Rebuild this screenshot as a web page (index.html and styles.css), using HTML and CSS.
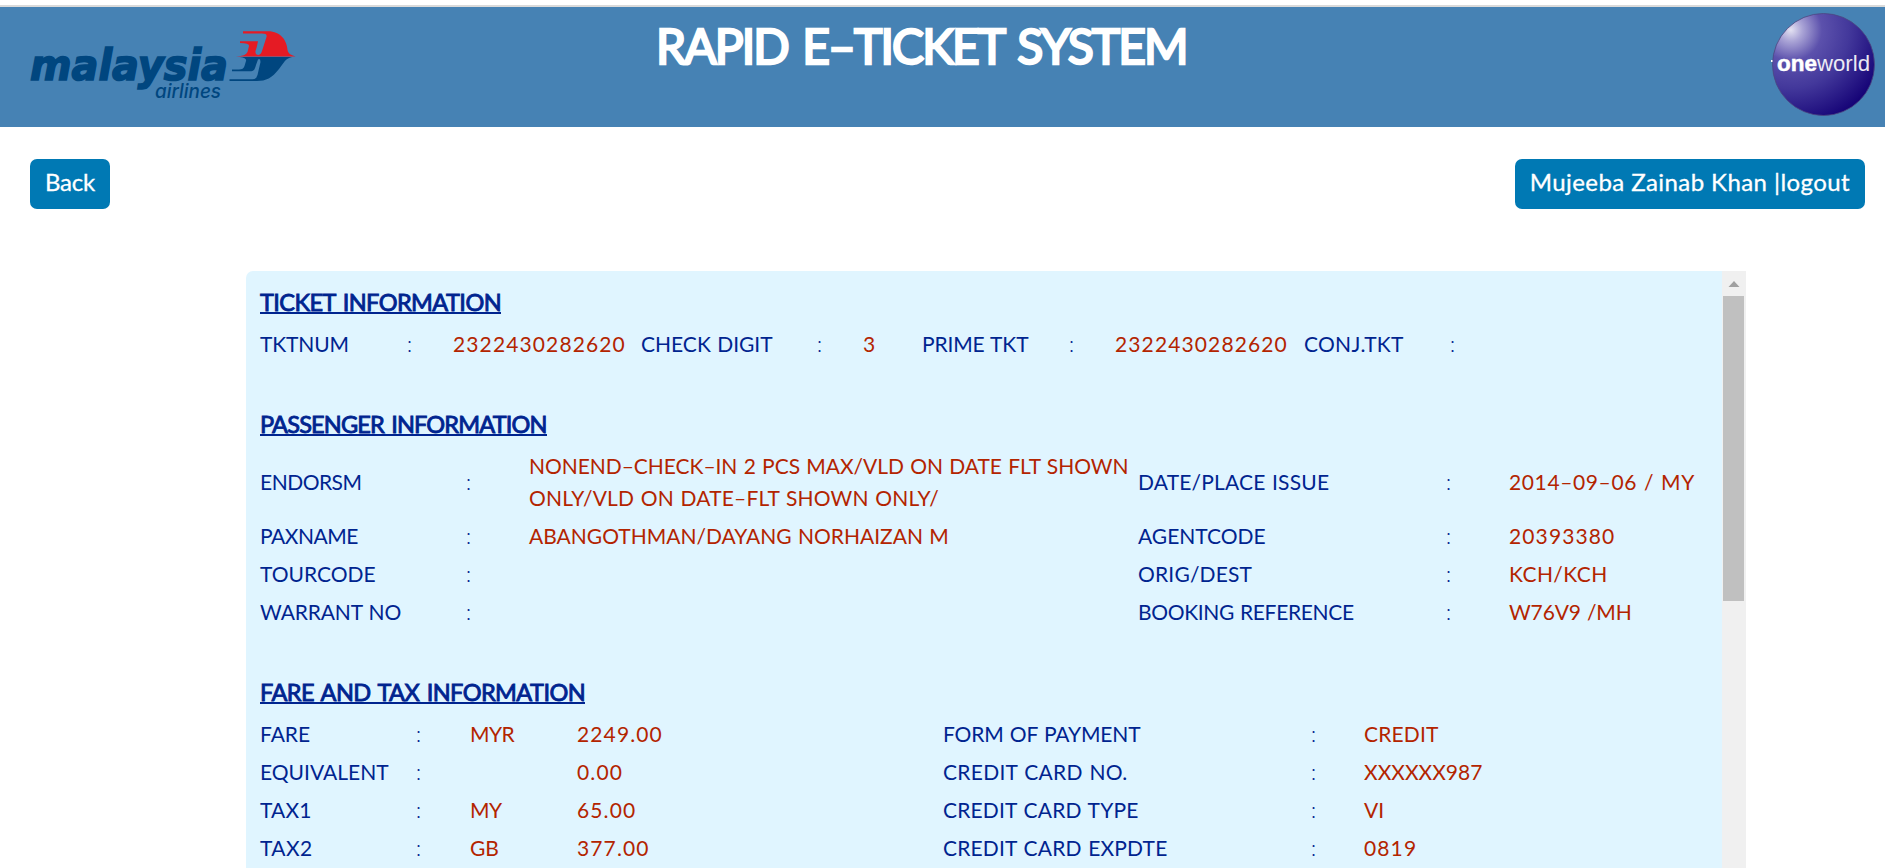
FILE: index.html
```html
<!DOCTYPE html>
<html lang="en">
<head>
<meta charset="utf-8">
<title>Rapid E-Ticket System</title>
<link rel="stylesheet" href="styles.css">
</head>
<body>
<header class="banner">
  <svg class="logo" width="280" height="120" viewBox="20 7 280 120">
    <g fill="#00467f" font-style="italic">
      <text x="30" y="80" font-size="43" font-weight="700" font-family="DejaVu Sans, sans-serif" textLength="198" lengthAdjust="spacingAndGlyphs" stroke="#00467f" stroke-width="1.600">malaysia</text>
      <text x="155" y="97.5" font-size="20" font-weight="500" font-family="Inter, sans-serif" textLength="66" lengthAdjust="spacingAndGlyphs">airlines</text>
    </g>
    <path fill="#e51b24" d="M243 31.3H268C281 31.3 287 41 287.500 50Q288 54.500 295.500 56.500H236Q246 56 247.500 52L249 46Q249.500 43.200 240 43V41.300H258Q257 47 255.500 51Q255 55 258.500 55Q261 54.500 262 51L266.500 37Q267.500 33.600 262 33.600H243Z"/>
    <path fill="#00467f" d="M240 57H292C285 58.500 284 63 279 69C272 78 266 81 257 81H229.500V79.300H252Q256.500 79.500 257.500 75L260.500 62Q260.500 58 258 59.500L256 65C254.500 70 254 71.200 250 71.200H232V69.600H239Q243.500 69.500 244.500 66L246 61Q247 58 240 57Z"/>
  </svg>
  <h1 class="title">RAPID E–TICKET SYSTEM</h1>
  <svg class="partner" width="120" height="120" viewBox="1765 7 120 120">
    <defs>
      <radialGradient id="ball" cx="0.18" cy="0.16" r="0.95">
        <stop offset="0" stop-color="#e4e2f2"/>
        <stop offset="0.12" stop-color="#aaa4d6"/>
        <stop offset="0.32" stop-color="#5c51ac"/>
        <stop offset="0.6" stop-color="#43389b"/>
        <stop offset="1" stop-color="#160477"/>
      </radialGradient>
    </defs>
    <circle cx="1823.500" cy="64.500" r="51" fill="url(#ball)" stroke="#4b4680" stroke-width="0.8"/>
    <rect x="1771" y="60" width="1.500" height="2" fill="#fff"/>
    <g fill="#fff" font-family="Liberation Sans, Arial, sans-serif" font-size="21.500">
      <text x="1777" y="71" font-weight="700" textLength="40" lengthAdjust="spacingAndGlyphs" stroke="#fff" stroke-width="0.500">one</text>
      <text x="1817" y="71" textLength="53" lengthAdjust="spacingAndGlyphs" opacity="0.9">world</text>
    </g>
  </svg>
</header>
<nav class="actions">
  <a class="button back">Back</a>
  <a class="button">Mujeeba Zainab Khan |logout</a>
</nav>
<main class="panel">
  <div class="content">
    <h2 class="heading"><span class="h-ticket">TICKET INFORMATION</span></h2>
    <div class="row ticket">
      <span class="s-snug">TKTNUM</span><i>:</i><b class="num">2322430282620</b>
      <span>CHECK DIGIT</span><i>:</i><b class="num">3</b>
      <span class="s-snug">PRIME TKT</span><i>:</i><b class="num">2322430282620</b>
      <span class="s-wide">CONJ.TKT</span><i>:</i>
    </div>
    <h2 class="heading"><span class="h-passenger">PASSENGER INFORMATION</span></h2>
    <div class="row passenger">
      <span class="s-tight">ENDORSM</span><i>:</i>
      <b class="endorsement"><span class="s-notice">NONEND–CHECK–IN 2 PCS MAX/VLD ON DATE FLT SHOWN</span><br><span class="s-loose">ONLY/VLD ON DATE–FLT SHOWN ONLY/</span></b>
      <span class="s-loose">DATE/PLACE ISSUE</span><i>:</i><b class="date">2014–09–06 / MY</b>
    </div>
    <div class="row passenger">
      <span class="s-tight">PAXNAME</span><i>:</i><b>ABANGOTHMAN/DAYANG NORHAIZAN M</b>
      <span>AGENTCODE</span><i>:</i><b class="num">20393380</b>
    </div>
    <div class="row passenger">
      <span>TOURCODE</span><i>:</i><b></b>
      <span class="s-loose">ORIG/DEST</span><i>:</i><b class="s-wider">KCH/KCH</b>
    </div>
    <div class="row passenger">
      <span class="s-snug">WARRANT NO</span><i>:</i><b></b>
      <span class="s-tighter">BOOKING REFERENCE</span><i>:</i><b class="s-snug">W76V9 /MH</b>
    </div>
    <h2 class="heading"><span class="h-fare">FARE AND TAX INFORMATION</span></h2>
    <div class="row fare">
      <span>FARE</span><i>:</i><b class="s-tight">MYR</b><b class="num">2249.00</b>
      <span class="s-snug">FORM OF PAYMENT</span><i>:</i><b class="s-loose">CREDIT</b>
    </div>
    <div class="row fare">
      <span>EQUIVALENT</span><i>:</i><b></b><b class="num">0.00</b>
      <span class="s-wide">CREDIT CARD NO.</span><i>:</i><b>XXXXXX987</b>
    </div>
    <div class="row fare">
      <span class="s-loose">TAX1</span><i>:</i><b class="s-tight">MY</b><b class="num">65.00</b>
      <span class="s-loose">CREDIT CARD TYPE</span><i>:</i><b>VI</b>
    </div>
    <div class="row fare">
      <span class="s-wider">TAX2</span><i>:</i><b>GB</b><b class="num">377.00</b>
      <span class="s-loose">CREDIT CARD EXPDTE</span><i>:</i><b class="num">0819</b>
    </div>
  </div>
  <div class="scrollbar">
    <svg class="arrow" width="24" height="25" viewBox="0 0 24 25"><path d="M12 10l5.500 6h-11z" fill="#a0a0a0"/></svg>
    <div class="thumb"></div>
  </div>
</main>
</body>
</html>
```

FILE: styles.css
```css
* { box-sizing: border-box; }

body {
  margin: 0;
  height: 100vh;
  overflow: hidden;
  padding-top: 5px;
  display: flex;
  flex-direction: column;
  background: #fff;
  font-family: Lato, "Open Sans", sans-serif;
}

.banner {
  flex: none;
  height: 122px;
  border-top: 2px solid #dadada;
  background: #4682b4;
  display: flex;
  padding-left: 20px;
}

.title {
  flex: 1;
  margin: 0;
  padding: 9px 0 0 356px;
  font-size: 48px;
  line-height: 60px;
  font-weight: 400;
  letter-spacing: -1.9px;
  word-spacing: 4px;
  color: #fff;
  -webkit-text-stroke: 2.4px #fff;
  white-space: nowrap;
}

.logo, .partner { flex: none; display: block; }

.actions {
  flex: none;
  display: flex;
  justify-content: space-between;
  padding: 32px 20px 62px 30px;
}

.button {
  height: 50px;
  padding: 0 15px;
  border-radius: 7px;
  background: #0079b4;
  color: #fff;
  font-size: 24px;
  line-height: 46px;
  letter-spacing: 0.42px;
  white-space: nowrap;
  -webkit-text-stroke: 0.3px #fff;
}

.back { letter-spacing: -0.2px; }

.panel {
  flex: 1;
  min-height: 0;
  width: 1500px;
  margin-left: 246px;
  display: flex;
  background: #e0f5ff;
  border-radius: 7px 0 0 0;
  overflow: hidden;
}

.content {
  flex: 1;
  padding: 6px 0 0 14px;
  overflow: hidden;
  color: #00248f;
}

.heading {
  margin: 0;
  padding-top: 35px;
  height: 84px;
  display: flex;
  font-size: 23.5px;
  line-height: 50px;
  font-weight: 400;
  white-space: nowrap;
  word-spacing: 2px;
  -webkit-text-stroke: 0.9px #00248f;
}

.heading:first-child { padding-top: 0; height: 49px; }

.heading span {
  height: 37px;
  border-bottom: 2px solid #00248f;
}

.h-ticket { letter-spacing: -0.55px; }
.h-passenger { letter-spacing: -0.82px; }
.h-fare { letter-spacing: -0.55px; }

.row {
  display: grid;
  align-items: center;
  padding: 2px 0 4px;
  min-height: 38px;
  font-size: 21px;
  line-height: 32px;
  white-space: nowrap;
  word-spacing: 1px;
}

.row i { font-style: normal; font-weight: 300; }
.row b { font-weight: 400; color: #b32400; }

.ticket { grid-template-columns: 147px 46px 188px 176px 46px 59px 147px 46px 189px 146px 20px; }
.passenger { grid-template-columns: 206px 63px 609px 308px 63px 1fr; }
.fare { grid-template-columns: 156px 54px 107px 366px 368px 53px 1fr; }

.row .num { letter-spacing: 1.12px; }
.row .date { letter-spacing: 0.62px; }
.s-tighter { letter-spacing: -0.34px; }
.s-tight { letter-spacing: -0.5px; }
.s-snug { letter-spacing: -0.15px; }
.s-notice { letter-spacing: -0.05px; }
.s-loose { letter-spacing: 0.18px; }
.s-wide { letter-spacing: 0.28px; }
.s-wider { letter-spacing: 0.43px; }

.scrollbar {
  flex: none;
  width: 24px;
  background: #f0f0f0;
}

.arrow { display: block; }

.thumb {
  width: 21px;
  height: 305px;
  margin-left: 1px;
  background: #c0c0c0;
}
```
